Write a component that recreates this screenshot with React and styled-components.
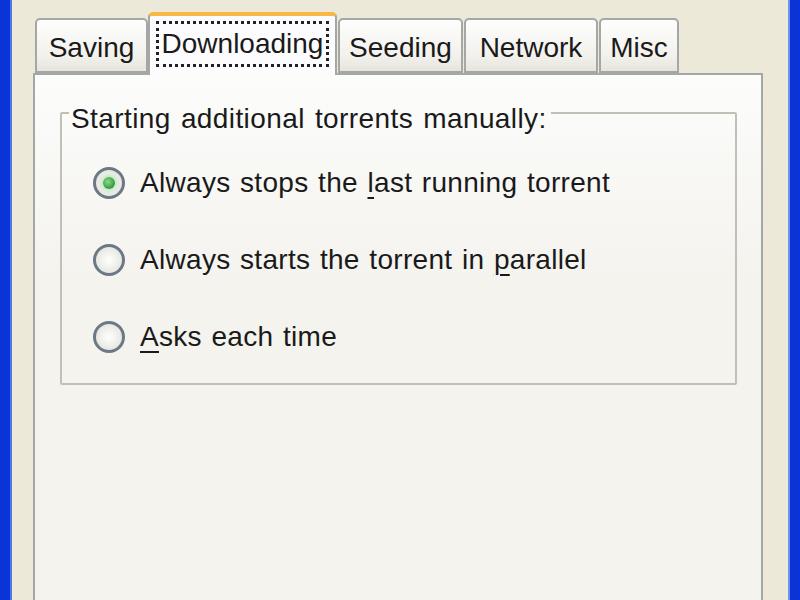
import React from 'react'
import styled, { createGlobalStyle } from 'styled-components';

const tabs = [
    { label: 'Saving', width: 113 },
    { label: 'Downloading', width: 189, active: true },
    { label: 'Seeding', width: 125 },
    { label: 'Network', width: 134 },
    { label: 'Misc', width: 80 },
];

const options = [
    { before: 'Always stops the ', key: 'l', after: 'ast running torrent', checked: true },
    { before: 'Always starts the torrent in ', key: 'p', after: 'arallel' },
    { before: '', key: 'A', after: 'sks each time' },
];

function App() {
    return (
        <>
            <GlobalStyle />
            <Window>
                <Body>
                    <TabStrip>
                        {
                            tabs.map(tab => (
                                <Tab key={tab.label} $active={tab.active} style={{ width: tab.width }}>
                                    <TabLabel $focused={tab.active}>{tab.label}</TabLabel>
                                </Tab>
                            ))
                        }
                    </TabStrip>
                    <Panel>
                        <Group>
                            <Legend>Starting additional torrents manually:</Legend>
                            {
                                options.map(opt => (
                                    <Option key={opt.key}>
                                        <Radio $checked={opt.checked} />
                                        <span>
                                            {opt.before}<u>{opt.key}</u>{opt.after}
                                        </span>
                                    </Option>
                                ))
                            }
                        </Group>
                    </Panel>
                </Body>
            </Window>
        </>
    )
}

export default App;

const GlobalStyle = createGlobalStyle`
  html, body {
    margin: 0;
    padding: 0;
    width: 800px;
    height: 600px;
    overflow: hidden;
  }
  body {
    font-family: "Liberation Sans", Arial, sans-serif;
  }
`;

const Window = styled.div`
  width: 800px;
  height: 600px;
  box-sizing: border-box;
  background: #0a34d6;
  display: flex;
  padding: 0 10px;
`;

const Body = styled.div`
  flex: 1;
  display: flex;
  flex-direction: column;
  background: #ece9d8;
  border-left: 2px solid #4a7ae8;
  border-right: 2px solid #6a95ee;
  padding: 12px 25px 0 21px;
`;

const TabStrip = styled.div`
  display: flex;
  align-items: flex-end;
  height: 61px;
  padding-left: 1px;
  position: relative;
  z-index: 1;
`;

const Tab = styled.div`
  box-sizing: border-box;
  height: ${p => (p.$active ? '63px' : '55px')};
  margin-bottom: ${p => (p.$active ? '-2px' : '0')};
  margin-left: ${p => (p.$active ? '0' : '1px')};
  display: flex;
  align-items: center;
  justify-content: center;
  border: 2px solid #a3a7a5;
  border-bottom: ${p => (p.$active ? 'none' : '2px solid #a3a7a5')};
  border-top: ${p => (p.$active ? '4px solid #f7b944' : '2px solid #a3a7a5')};
  border-radius: 5px 5px 0 0;
  background: ${p => (p.$active
    ? '#fcfcfe'
    : 'linear-gradient(#fefefe, #f2f1ec 70%, #e6e4dc)')};
  font-size: 28px;
  color: #1a1a1a;
  padding-top: ${p => (p.$active ? '0' : '4px')};
`;

const TabLabel = styled.span`
  padding: 3px 3px;
  border: 3px dotted ${p => (p.$focused ? '#222' : 'transparent')};
  line-height: 34px;
  margin-top: ${p => (p.$focused ? '-4px' : '0')};
`;

const Panel = styled.div`
  flex: 1;
  border: 2px solid #a3a7a5;
  border-bottom: none;
  background: linear-gradient(#fcfcfb, #f4f3ee 40%, #f4f3ee);
  padding: 15px 24px 0 25px;
`;

const Group = styled.fieldset`
  margin: 0;
  height: 295px;
  box-sizing: border-box;
  border: 2px solid #c2c0b6;
  border-radius: 2px;
  padding: 28px 0 0 0;
  display: flex;
  flex-direction: column;
  gap: 39px;
`;

const Legend = styled.legend`
  font-size: 28px;
  letter-spacing: 0.4px;
  word-spacing: 2px;
  color: #1a1a1a;
  padding: 12px 4px 0 2px;
  margin-left: 7px;
  line-height: 34px;
`;

const Option = styled.div`
  display: flex;
  align-items: center;
  gap: 15px;
  height: 38px;
  margin-left: 31px;
  font-size: 28px;
  letter-spacing: 0.3px;
  word-spacing: 1.5px;
  color: #1a1a1a;
  u {
    text-underline-offset: 5px;
    text-decoration-thickness: 2px;
  }
`;

const Radio = styled.span`
  width: 32px;
  height: 32px;
  box-sizing: border-box;
  border-radius: 50%;
  border: 3px solid #6c7885;
  background: radial-gradient(circle at 50% 50%, #fefefe, #e8e8e2 70%, #d6d6ce);
  position: relative;
  flex-shrink: 0;
  &::after {
    content: '';
    display: ${p => (p.$checked ? 'block' : 'none')};
    position: absolute;
    left: 50%;
    top: 50%;
    width: 12px;
    height: 12px;
    margin: -6px 0 0 -6px;
    border-radius: 50%;
    background: radial-gradient(circle at 40% 40%, #8fd88f, #2f9a3a 70%);
    box-shadow: 0 0 4px 2px #b9e7b9;
  }
`;
